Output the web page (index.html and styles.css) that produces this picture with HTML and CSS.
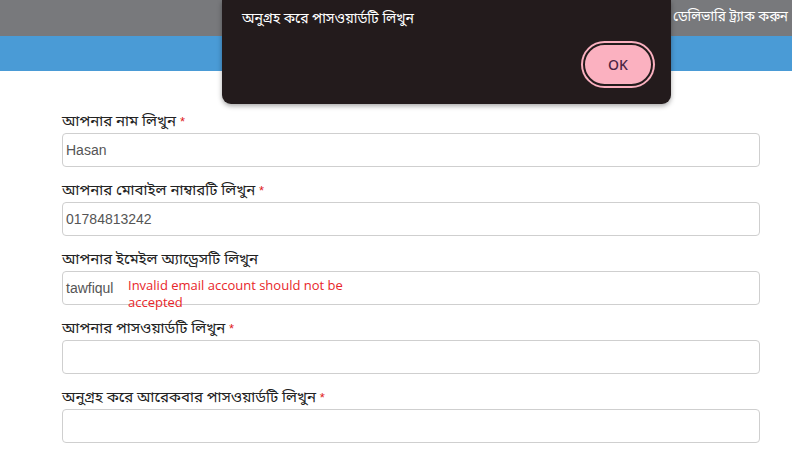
FILE: index.html
```html
<!DOCTYPE html>
<html lang="bn">
<head>
<meta charset="utf-8">
<link rel="stylesheet" href="styles.css">
</head>
<body>
<header class="topbar">
  <span class="track">ডেলিভারি ট্র্যাক করুন</span>
</header>
<div class="bluebar"></div>
<form class="form">
  <div class="field">
    <label class="label">আপনার নাম লিখুন <span class="req">*</span></label>
    <div class="input">Hasan</div>
  </div>
  <div class="field">
    <label class="label">আপনার মোবাইল নাম্বারটি লিখুন <span class="req">*</span></label>
    <div class="input">01784813242</div>
  </div>
  <div class="field">
    <label class="label">আপনার ইমেইল অ্যাড্রেসটি লিখুন</label>
    <div class="input email">tawfiqul<span class="err">Invalid email account should not be accepted</span></div>
  </div>
  <div class="field">
    <label class="label">আপনার পাসওয়ার্ডটি লিখুন <span class="req">*</span></label>
    <div class="input"></div>
  </div>
  <div class="field">
    <label class="label">অনুগ্রহ করে আরেকবার পাসওয়ার্ডটি লিখুন <span class="req">*</span></label>
    <div class="input"></div>
  </div>
</form>
<div class="dialog">
  <p class="msg">অনুগ্রহ করে পাসওয়ার্ডটি লিখুন</p>
  <div class="actions"><button class="ok" type="button">OK</button></div>
</div>
</body>
</html>
```
FILE: styles.css
```css
* { box-sizing: border-box; }
html, body { margin: 0; padding: 0; }
body {
  width: 792px;
  height: 453px;
  overflow: hidden;
  background: #fff;
  font-family: "Noto Sans Bengali", "Noto Serif Bengali", "Lohit Bengali", "FreeSans", "Noto Sans", "Liberation Sans", sans-serif;
  position: relative;
}
.topbar {
  height: 36px;
  background: #78797c;
  display: flex;
  justify-content: flex-end;
  align-items: center;
  padding-right: 4px;
}
.track { color: #fff; font-size: 13.5px; }
.bluebar { height: 35px; background: #4a9bd6; }
.form {
  width: 698px;
  margin-left: 62px;
  padding-top: 40px;
  display: flex;
  flex-direction: column;
  gap: 13px;
}
.field { display: flex; flex-direction: column; }
.label {
  height: 22px;
  line-height: 22px;
  font-size: 15px;
  color: #222;
}
.req { color: #e02020; font-family: "Liberation Sans", sans-serif; font-size: 13px; }
.input {
  height: 34px;
  border: 1px solid #cfcfcf;
  border-radius: 4px;
  padding: 0 3px;
  line-height: 32px;
  font-family: "Liberation Sans", Arial, sans-serif;
  font-size: 14px;
  color: #555;
  position: relative;
}
.err {
  position: absolute;
  left: 65px;
  top: 5px;
  width: 230px;
  font-family: "Open Sans", sans-serif;
  font-size: 13px;
  line-height: 17px;
  color: #e8262a;
}
.dialog {
  position: absolute;
  left: 222px;
  top: 0;
  width: 449px;
  height: 104px;
  background: #231b1c;
  border-radius: 0 0 9px 9px;
  box-shadow: 0 2px 5px rgba(0,0,0,0.35);
  padding: 10px 18px 0 20px;
}
.msg { margin: 0; color: #fff; font-size: 14px; line-height: 20px; }
.actions { display: flex; justify-content: flex-end; margin-top: 13px; }
.ok {
  width: 70px;
  height: 43px;
  border-radius: 22px;
  background: #fbb1c0;
  border: 2px solid #231b1c;
  box-shadow: 0 0 0 2px #fbb1c0;
  color: #4a2545;
  font-family: "Noto Sans", sans-serif;
  font-size: 14px;
  font-weight: 500;
}
```
